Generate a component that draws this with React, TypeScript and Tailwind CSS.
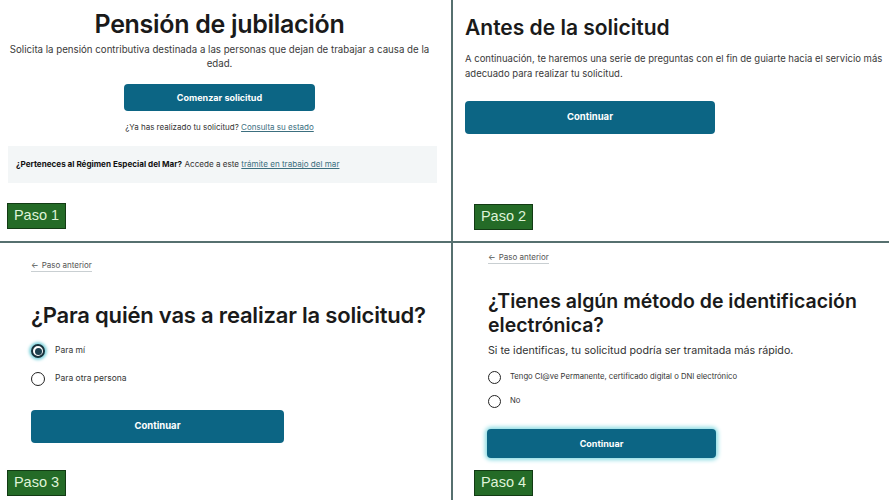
import React from "react";

function Badge({ label, left, top }: { label: string; left: string; top: string }) {
  return (
    <div
      className={`absolute ${left} ${top} w-[59px] h-[26px] bg-[#246b27] border border-[#123b14] flex items-center justify-center text-[14.5px] text-[#dff3d8] font-['Liberation_Sans',Arial,sans-serif]`}
    >
      {label}
    </div>
  );
}

function Radio({ checked, size }: { checked?: boolean; size: string }) {
  if (checked) {
    return (
      <span
        className={`${size} rounded-full border-[2px] border-[#17323c] bg-white flex items-center justify-center shadow-[0_0_3px_2px_#7fd3dc] shrink-0`}
      >
        <span className="w-[7px] h-[7px] rounded-full bg-[#1d4150]" />
      </span>
    );
  }
  return <span className={`${size} rounded-full border-[1.5px] border-[#222] bg-white shrink-0`} />;
}

function Back() {
  return (
    <div className="flex w-fit items-center gap-[3px] text-[8px] leading-[10px] text-[#555] border-b border-[#c9cfd2] pb-[1px]">
      <span className="text-[8px]">←</span>
      <span>Paso anterior</span>
    </div>
  );
}

export default function App() {
  return (
    <div className="w-[889px] h-[500px] grid grid-cols-[451px_436px] grid-rows-[241px_257px] gap-[2px] bg-[#56706f] font-['Inter',sans-serif] text-[#1a1a1a]">
      {/* Paso 1 */}
      <div className="relative bg-white overflow-hidden">
        <div className="flex flex-col items-center w-[439px] pt-[9px]">
          <h1 className="text-[25px] leading-[30px] font-semibold tracking-[-0.3px]">Pensión de jubilación</h1>
          <p className="mt-[4px] text-[9.7px] leading-[14px] text-[#3a3a3a] text-center whitespace-nowrap">
            Solicita la pensión contributiva destinada a las personas que dejan de trabajar a causa de la
            <br />
            edad.
          </p>
          <button className="mt-[13px] w-[191px] h-[27px] rounded-[4px] bg-[#0c6584] text-white text-[9px] font-bold">
            Comenzar solicitud
          </button>
          <p className="mt-[10px] text-[8px] leading-[12px] text-[#333]">
            ¿Ya has realizado tu solicitud? <span className="underline text-[#3c6f7f]">Consulta su estado</span>
          </p>
        </div>
        <div className="ml-[8px] mt-[13px] w-[429px] h-[37px] bg-[#f3f6f7] flex items-center px-[8px] text-[8.1px] text-[#333]">
          <span>
            <b className="font-bold text-[#111]">¿Perteneces al Régimen Especial del Mar?</b> Accede a este{" "}
            <span className="underline text-[#3c6f7f]">trámite en trabajo del mar</span>
          </span>
        </div>
        <Badge label="Paso 1" left="left-[7px]" top="top-[203px]" />
      </div>

      {/* Paso 2 */}
      <div className="relative bg-white overflow-hidden pl-[12px] pt-[15px]">
        <h2 className="text-[21px] leading-[26px] font-semibold">Antes de la solicitud</h2>
        <p className="mt-[10px] text-[9.5px] leading-[15px] text-[#3a3a3a] whitespace-nowrap">
          A continuación, te haremos una serie de preguntas con el fin de guiarte hacia el servicio más
          <br />
          adecuado para realizar tu solicitud.
        </p>
        <button className="mt-[20px] w-[250px] h-[33px] rounded-[4px] bg-[#0c6584] text-white text-[9.5px] font-bold">
          Continuar
        </button>
        <Badge label="Paso 2" left="left-[21px]" top="top-[204px]" />
      </div>

      {/* Paso 3 */}
      <div className="relative bg-white overflow-hidden pl-[31px] pt-[17px]">
        <Back />
        <h2 className="mt-[30px] text-[22px] leading-[27px] font-semibold tracking-[-0.2px] whitespace-nowrap">
          ¿Para quién vas a realizar la solicitud?
        </h2>
        <div className="mt-[15px] flex flex-col gap-[14px]">
          <label className="flex items-center gap-[10px] text-[8.5px] text-[#333] h-[14px]">
            <Radio checked size="w-[14px] h-[14px]" />
            <span className="-mt-[2px]">Para mí</span>
          </label>
          <label className="flex items-center gap-[10px] text-[8.5px] text-[#333] h-[14px]">
            <Radio size="w-[14px] h-[14px]" />
            <span className="-mt-[2px]">Para otra persona</span>
          </label>
        </div>
        <button className="mt-[24px] w-[253px] h-[33px] rounded-[4px] bg-[#0c6584] text-white text-[9.5px] font-bold">
          Continuar
        </button>
        <Badge label="Paso 3" left="left-[7px]" top="top-[227px]" />
      </div>

      {/* Paso 4 */}
      <div className="relative bg-white overflow-hidden pl-[35px] pt-[9px]">
        <Back />
        <h2 className="mt-[25px] text-[19.5px] leading-[24px] font-semibold whitespace-nowrap">
          ¿Tienes algún método de identificación
          <br />
          electrónica?
        </h2>
        <p className="mt-[7px] text-[10.7px] leading-[14px] text-[#333]">
          Si te identificas, tu solicitud podría ser tramitada más rápido.
        </p>
        <div className="mt-[13px] flex flex-col gap-[11px]">
          <label className="flex items-center gap-[9px] text-[7.7px] text-[#333] h-[13px]">
            <Radio size="w-[13px] h-[13px]" />
            <span className="-mt-[2px]">Tengo Cl@ve Permanente, certificado digital o DNI electrónico</span>
          </label>
          <label className="flex items-center gap-[9px] text-[7.7px] text-[#333] h-[13px]">
            <Radio size="w-[13px] h-[13px]" />
            <span className="-mt-[2px]">No</span>
          </label>
        </div>
        <button className="mt-[21px] -ml-[1px] w-[229px] h-[29px] rounded-[4px] bg-[#0c6584] text-white text-[9px] font-bold shadow-[0_0_4px_2px_#8adbe3]">
          Continuar
        </button>
        <Badge label="Paso 4" left="left-[21px]" top="top-[227px]" />
      </div>
    </div>
  );
}
